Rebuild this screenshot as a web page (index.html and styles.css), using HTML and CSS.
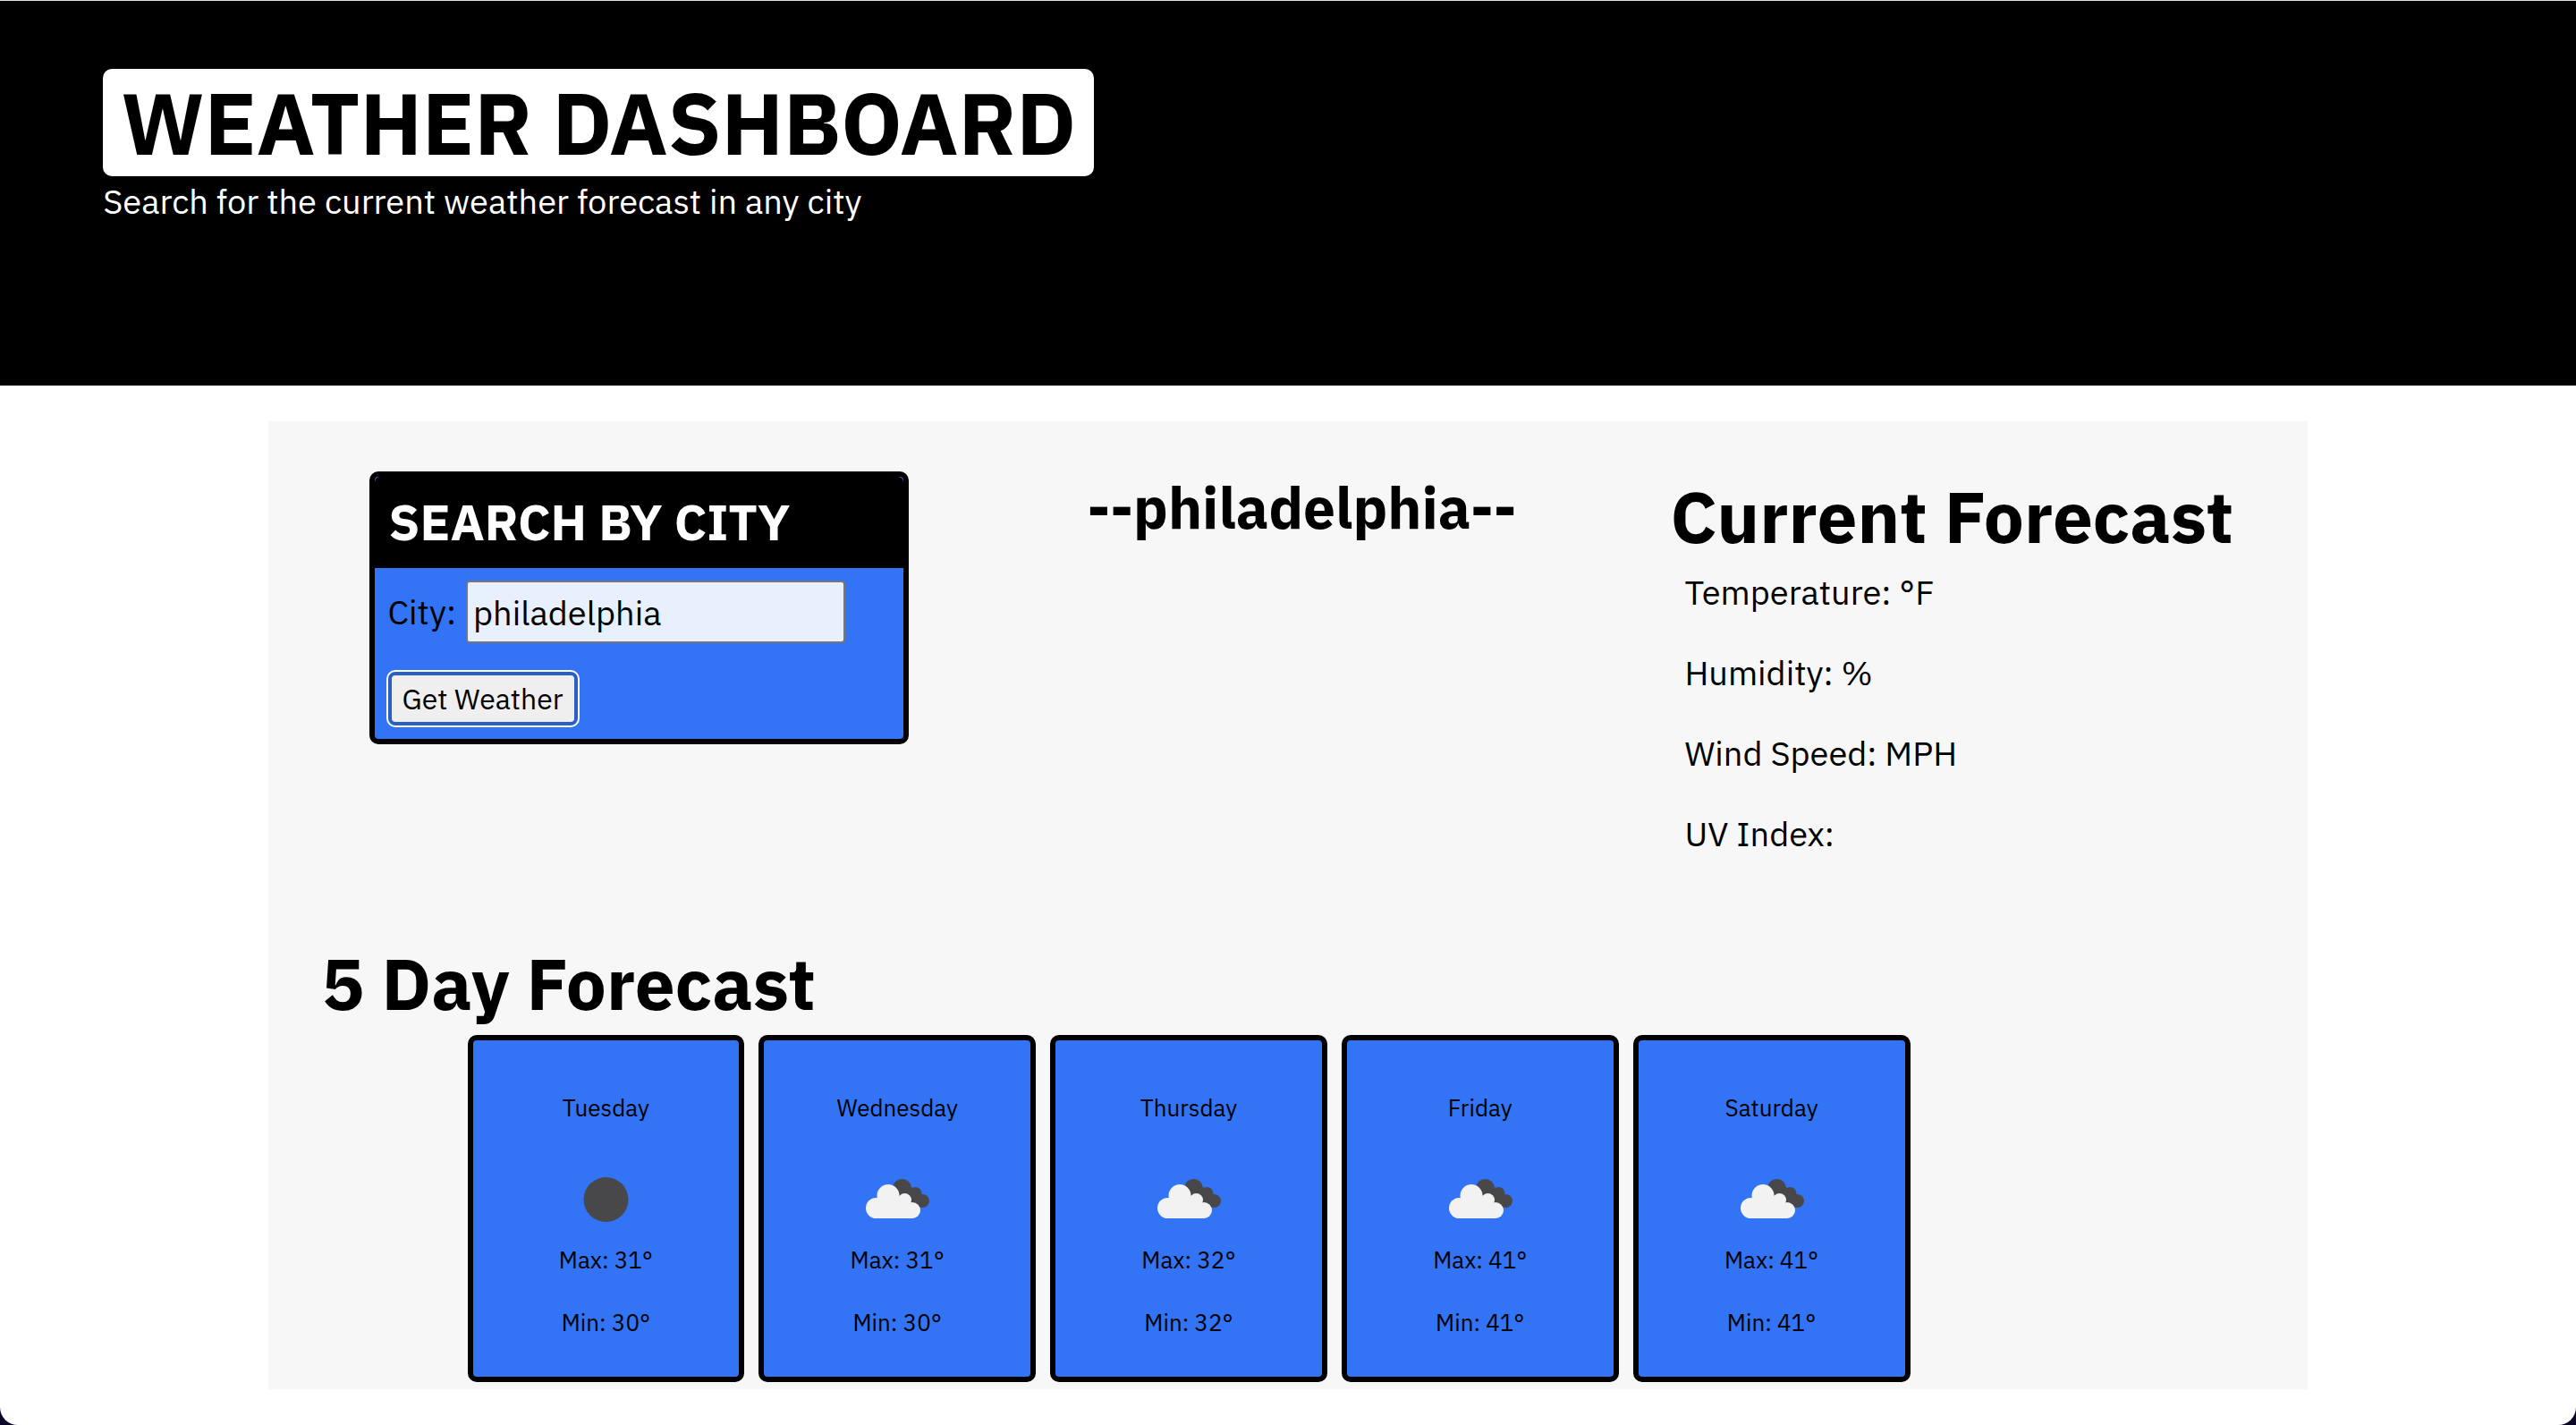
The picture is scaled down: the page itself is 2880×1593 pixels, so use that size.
FILE: index.html
```html
<!DOCTYPE html>
<html lang="en">
<head>
<meta charset="utf-8">
<meta name="viewport" content="width=device-width, initial-scale=1">
<title>Weather Dashboard</title>
<link rel="stylesheet" href="styles.css">
</head>
<body>
<svg class="sprite" aria-hidden="true">
  <symbol id="clear-night" viewBox="0 0 100 100">
    <circle cx="50.5" cy="50" r="25" fill="#48484a"/>
  </symbol>
  <symbol id="broken-clouds" viewBox="0 0 100 100">
    <g fill="#48484a">
      <circle cx="55.5" cy="37.5" r="10.5"/>
      <circle cx="70.5" cy="43" r="7"/>
      <circle cx="78.5" cy="51.5" r="7.5"/>
      <path d="M46 36h20l12 10-1 13-11-3-18-12z"/>
    </g>
    <g fill="#f2f2f2">
      <circle cx="26.5" cy="59.500" r="11.5"/>
      <circle cx="40" cy="45.500" r="12.500"/>
      <circle cx="58.500" cy="50.500" r="7.500"/>
      <circle cx="67" cy="62" r="9"/>
      <path d="M26.500 71V56l2-10H53l12 8 2 17z"/>
    </g>
  </symbol>
</svg>

<header class="hero">
  <h1 class="hero-title">WEATHER DASHBOARD</h1>
  <p class="hero-text">Search for the current weather forecast in any city</p>
</header>

<main class="dashboard">
  <div class="overview">
    <section class="search">
      <h2 class="search-title">SEARCH BY CITY</h2>
      <form class="search-form">
        <div class="field">
          <label for="city">City:</label>
          <input class="city-input" id="city" type="text" value="philadelphia">
        </div>
        <button class="search-button" type="button">Get Weather</button>
      </form>
    </section>
    <h2 class="city-name">--philadelphia--</h2>
    <section class="current">
      <h2 class="section-title">Current Forecast</h2>
      <div class="readings">
        <p>Temperature: °F</p>
        <p>Humidity: %</p>
        <p>Wind Speed: MPH</p>
        <p>UV Index:</p>
      </div>
    </section>
  </div>

  <section class="five-day">
    <h2 class="section-title">5 Day Forecast</h2>
    <div class="cards">
      <article class="card">
        <p>Tuesday</p>
        <svg class="card-icon" role="img" aria-label="Clear"><use href="#clear-night"/></svg>
        <p>Max: 31°</p>
        <p>Min: 30°</p>
      </article>
      <article class="card">
        <p>Wednesday</p>
        <svg class="card-icon" role="img" aria-label="Cloudy"><use href="#broken-clouds"/></svg>
        <p>Max: 31°</p>
        <p>Min: 30°</p>
      </article>
      <article class="card">
        <p>Thursday</p>
        <svg class="card-icon" role="img" aria-label="Cloudy"><use href="#broken-clouds"/></svg>
        <p>Max: 32°</p>
        <p>Min: 32°</p>
      </article>
      <article class="card">
        <p>Friday</p>
        <svg class="card-icon" role="img" aria-label="Cloudy"><use href="#broken-clouds"/></svg>
        <p>Max: 41°</p>
        <p>Min: 41°</p>
      </article>
      <article class="card">
        <p>Saturday</p>
        <svg class="card-icon" role="img" aria-label="Cloudy"><use href="#broken-clouds"/></svg>
        <p>Max: 41°</p>
        <p>Min: 41°</p>
      </article>
    </div>
  </section>
</main>
</body>
</html>
```

FILE: styles.css
```css
* {
  box-sizing: border-box;
}

html {
  background: #0d0628;
}

body {
  min-height: 100vh;
  margin: 0;
  overflow-x: hidden;
  background: #fff;
  border-radius: 0 0 20px 20px;
  color: #000;
  font-family: "IBM Plex Sans", Roboto, sans-serif;
  font-size: 38px;
  line-height: 50px;
}

h1,
h2,
p {
  margin: 0;
}

.sprite {
  display: none;
}

.hero {
  display: flex;
  flex-direction: column;
  align-items: flex-start;
  padding: 76px 4% 178px;
  background: #000;
  border-top: 1px solid #dfe3e2;
  color: #fff;
}

.hero-title {
  padding: 0 20px;
  background: #fff;
  border-radius: 10px;
  color: #000;
  font-size: 96px;
  line-height: 120px;
}

.hero-text {
  line-height: 56px;
}

.dashboard {
  width: 79.2%;
  margin: 40px auto;
  padding: 56px 0 8px;
  background: #f7f7f7;
}

.overview {
  display: grid;
  grid-template-columns: 603fr 852fr 713fr;
  align-items: start;
  padding-left: 113px;
}

.search {
  background: #3274f5;
  border: 6px solid #000;
  border-radius: 10px;
}

.search-title {
  padding: 0 16px 2px;
  background: #000;
  border-radius: 6px 6px 0 0;
  color: #fff;
  font-size: 56px;
  line-height: 100px;
}

.search-form {
  display: flex;
  flex-direction: column;
  align-items: flex-start;
  gap: 32px;
  padding: 14px 15px 15px;
}

.field {
  display: flex;
  align-items: center;
  gap: 11px;
}

.city-input {
  width: 424px;
  height: 70px;
  padding: 2px 6px;
  background: #e8f0fe;
  border: 2px solid #767676;
  border-radius: 4px;
  color: #000;
  font: inherit;
}

.search-button {
  padding: 0 12px;
  background: #efefef;
  border: 4px solid #2860c8;
  border-radius: 8px;
  box-shadow: 0 0 0 2px #fff;
  color: #000;
  font: inherit;
  font-size: 32px;
  line-height: 52px;
}

.city-name {
  padding-left: 28px;
  font-size: 64px;
  line-height: 80px;
  text-align: center;
}

.section-title {
  font-size: 80px;
  line-height: 100px;
}

.readings {
  display: flex;
  flex-direction: column;
  gap: 40px;
  padding: 10px 16px 0;
}

.five-day {
  padding: 92px 0 0 60px;
}

.cards {
  display: flex;
  gap: 16px;
  margin: 8px 445px 0 163px;
}

.card {
  display: flex;
  flex: 1;
  flex-direction: column;
  align-items: center;
  gap: 36px;
  padding: 58px 8px 44px;
  background: #3274f5;
  border: 6px solid #000;
  border-radius: 10px;
  font-size: 26px;
  line-height: 34px;
}

.card-icon {
  width: 100px;
  height: 100px;
  margin-bottom: -36px;
}
```
